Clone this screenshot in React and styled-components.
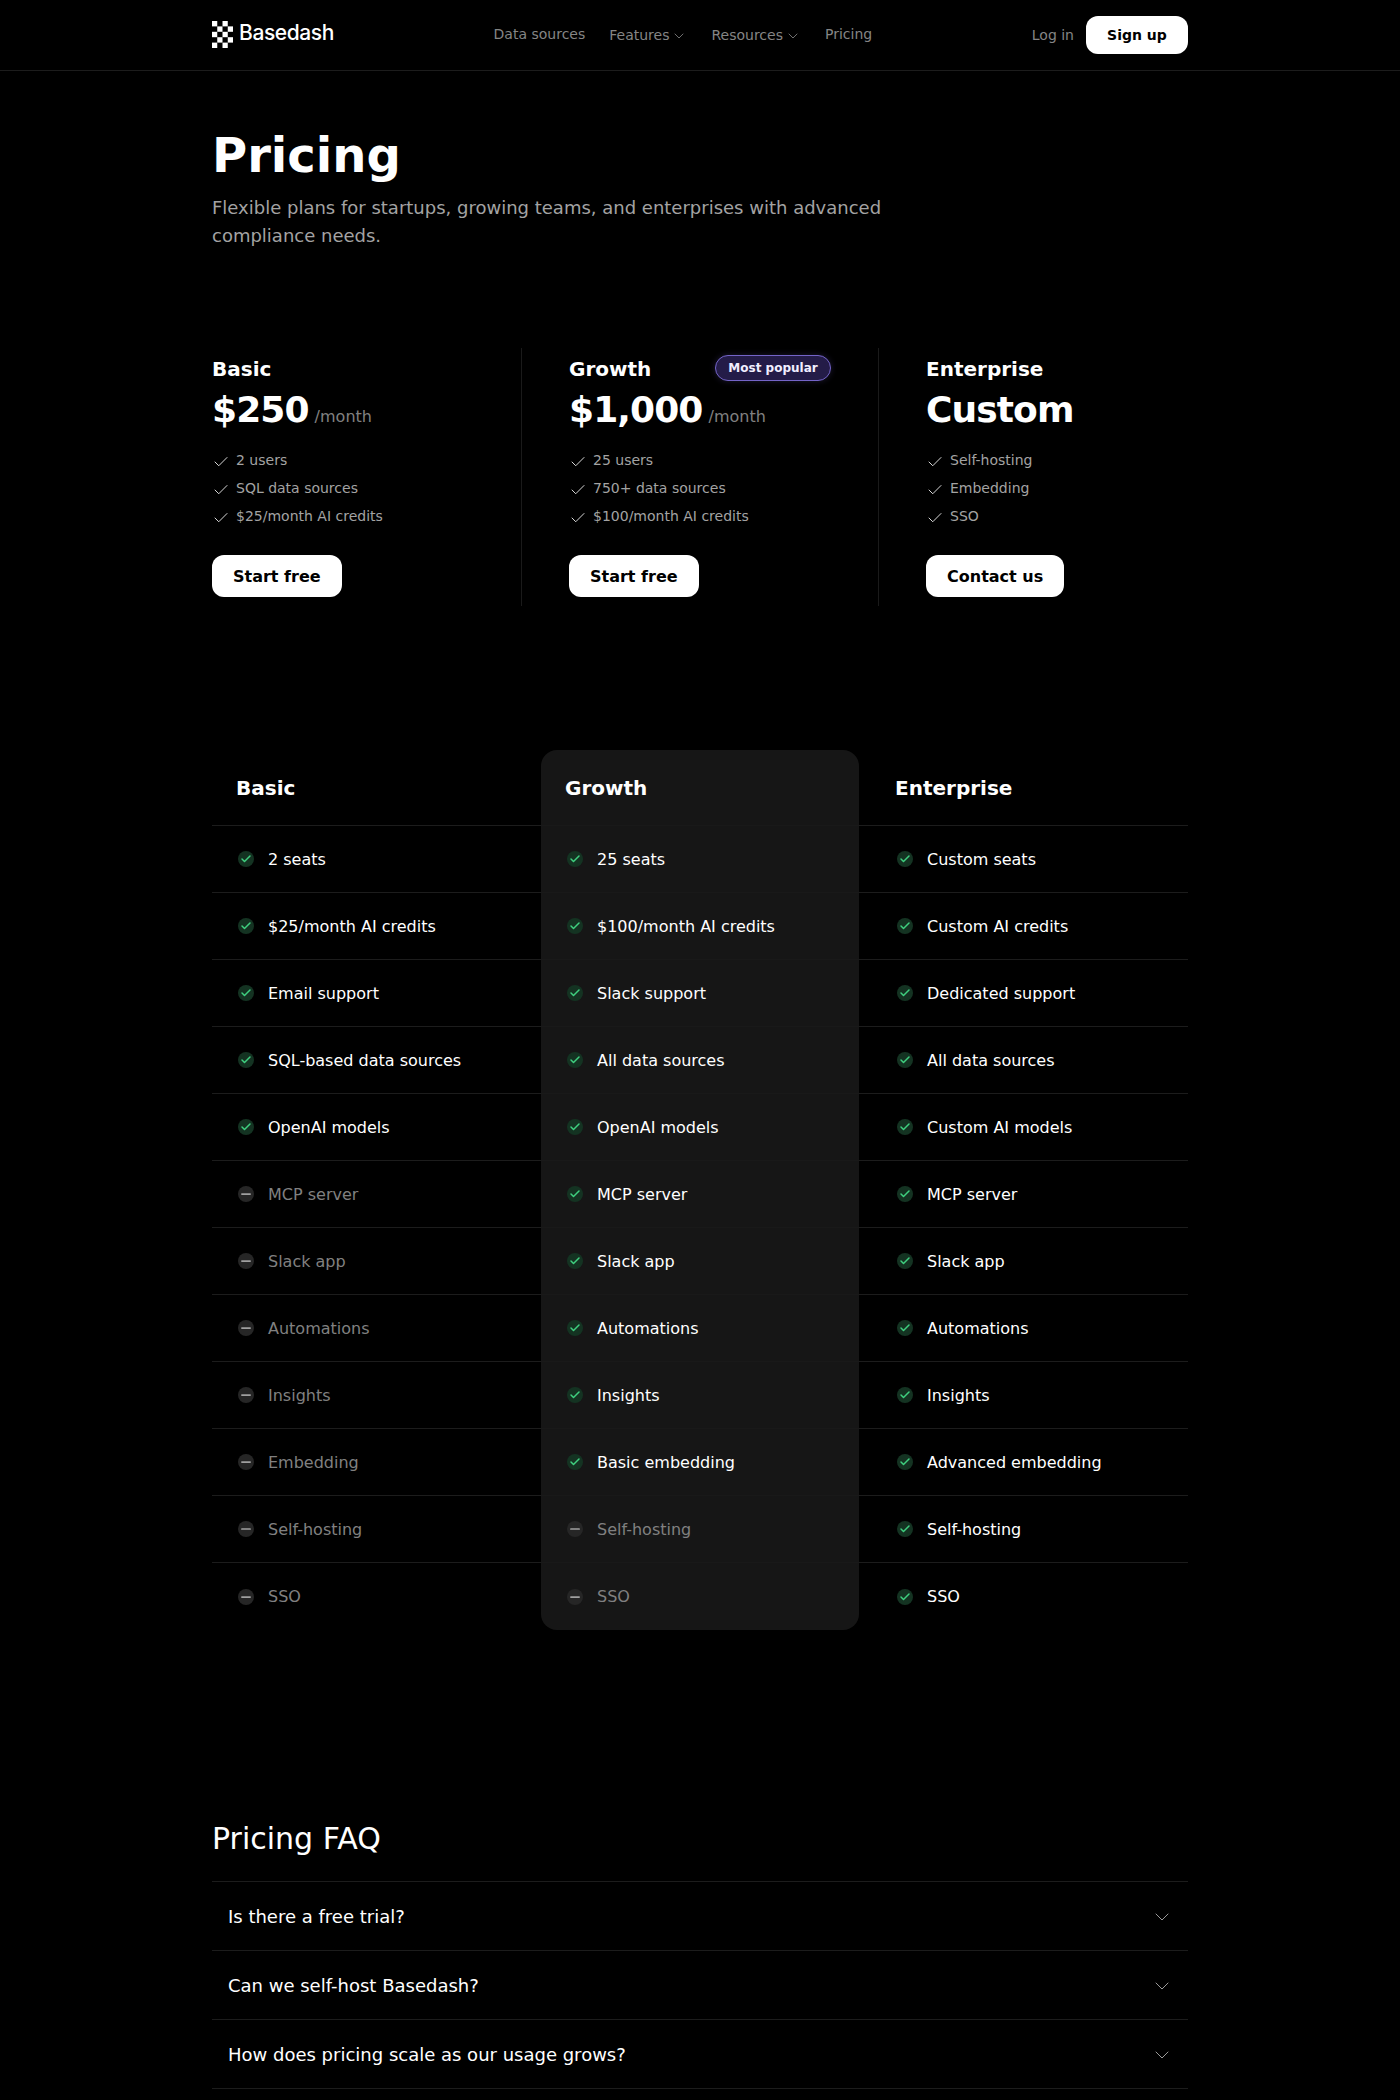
import React from 'react'
import styled, { createGlobalStyle } from 'styled-components'
import { Check, ChevronDown, Minus } from 'lucide-react'

const GlobalStyle = createGlobalStyle`
  html, body {
    margin: 0;
    background: #000;
    color: #fff;
    font-family: "DejaVu Sans", Verdana, sans-serif;
  }
  * { box-sizing: border-box; }
`

const Header = styled.header`
  height: 71px;
  border-bottom: 1px solid #1c1c1c;
`
const HeaderInner = styled.div`
  width: 976px;
  height: 70px;
  margin: 0 auto;
  display: flex;
  align-items: center;
  justify-content: space-between;
`
const Logo = styled.div`
  display: flex;
  align-items: center;
  gap: 6px;
  width: 122px;
  white-space: nowrap;
  font-family: Inter, sans-serif;
  font-weight: 500;
  font-size: 21px;
  line-height: 26px;
  letter-spacing: -0.4px;
  color: #fff;
  margin-top: -4px;
  svg {
    flex: none;
    margin-top: 2px;
  }
`
const Nav = styled.nav`
  display: flex;
  align-items: center;
  gap: 24px;
  margin-top: -2px;
  font-size: 14px;
  color: #858585;
`
const NavItem = styled.span`
  display: flex;
  align-items: center;
  gap: 2px;
  position: relative;
  top: ${p => (p.$menu ? '1px' : '0')};
  svg {
    margin-top: 1px;
  }
`
const Actions = styled.div`
  display: flex;
  align-items: center;
  gap: 12px;
`
const LogIn = styled.span`
  font-size: 14px;
  color: #858585;
`
const SignUp = styled.button`
  width: 102px;
  height: 38px;
  border: 0;
  border-radius: 12px;
  background: #fff;
  color: #000;
  font: bold 14px "DejaVu Sans", sans-serif;
`

const Page = styled.main`
  width: 976px;
  margin: 0 auto;
`
const Hero = styled.section`
  padding-top: 56px;
`
const Title = styled.h1`
  margin: 0;
  font-size: 48px;
  line-height: 56px;
  font-weight: 700;
`
const Lead = styled.p`
  width: 700px;
  margin: 11px 0 0;
  font-size: 18px;
  line-height: 28px;
  color: #a3a3a3;
`

const Plans = styled.section`
  display: flex;
  margin-top: 98px;
  height: 258px;
`
const Plan = styled.div`
  width: ${p => p.$width}px;
  padding: 0 ${p => (p.$last ? 0 : 47)}px 0 ${p => (p.$first ? 0 : 47)}px;
  border-right: ${p => (p.$last ? 'none' : '1px solid #1a1a1a')};
`
const PlanHead = styled.div`
  display: flex;
  align-items: center;
  justify-content: space-between;
  height: 28px;
  margin-top: 7px;
`
const PlanName = styled.h3`
  margin: 0;
  font-size: 20px;
  line-height: 28px;
  font-weight: 600;
`
const Badge = styled.span`
  width: 116px;
  height: 26px;
  margin-top: -3px;
  display: flex;
  align-items: center;
  justify-content: center;
  border: 1.5px solid #7464c8;
  border-radius: 999px;
  background: #241c48;
  box-shadow: 0 0 6px rgba(116, 100, 200, 0.25);
  color: #f1eeff;
  font-size: 12px;
  font-weight: 700;
`
const PriceRow = styled.div`
  display: flex;
  align-items: baseline;
  gap: 6px;
  height: 40px;
  margin-top: 7px;
`
const Price = styled.span`
  font-size: 36px;
  line-height: 40px;
  font-weight: 700;
  letter-spacing: -0.9px;
`
const Period = styled.span`
  font-size: 16px;
  color: #808080;
`
const Features = styled.ul`
  list-style: none;
  margin: 16px 0 0;
  padding: 0;
`
const Feature = styled.li`
  display: flex;
  align-items: center;
  gap: 6px;
  height: 28px;
  font-size: 14px;
  color: #a3a3a3;
  svg {
    color: #e6e6e6;
    flex: none;
    margin-top: 3px;
  }
`
const CTA = styled.button`
  display: block;
  height: 42px;
  margin-top: 25px;
  padding: 0 21px;
  border: 0;
  border-radius: 12px;
  background: #fff;
  color: #000;
  font: bold 16px "DejaVu Sans", sans-serif;
`

const Table = styled.section`
  display: grid;
  grid-template-columns: 329px 318px 329px;
  margin-top: 144px;
`
const Column = styled.div`
  background: ${p => (p.$hot ? '#161616' : 'transparent')};
  border-radius: ${p => (p.$hot ? '16px' : '0')};
`
const ColumnHead = styled.div`
  height: 76px;
  display: flex;
  align-items: center;
  padding-left: ${p => p.$pad}px;
  border-bottom: 1px solid ${p => (p.$hot ? '#191919' : '#1c1c1c')};
  font-size: 20px;
  font-weight: 700;
`
const Row = styled.div`
  height: 67px;
  display: flex;
  align-items: center;
  gap: 12px;
  padding-left: ${p => p.$pad + 2}px;
  border-bottom: 1px solid ${p => (p.$hot ? '#191919' : '#1c1c1c')};
  font-size: 16px;
  color: ${p => (p.$off ? '#808080' : '#fff')};
  &:last-child {
    border-bottom: 0;
  }
`
const Mark = styled.span`
  width: 16px;
  height: 16px;
  margin-right: 2px;
  border-radius: 50%;
  flex: none;
  display: flex;
  align-items: center;
  justify-content: center;
  background: ${p => (p.$off ? '#262626' : '#143322')};
  color: ${p => (p.$off ? '#a0a0a0' : '#3fcf7f')};
`

const Faq = styled.section`
  margin-top: 191px;
`
const FaqTitle = styled.h2`
  margin: 0 0 24px;
  font-size: 30px;
  line-height: 36px;
  font-weight: 400;
`
const FaqList = styled.div`
  border-top: 1px solid #1c1c1c;
`
const FaqRow = styled.div`
  height: 69px;
  display: flex;
  align-items: center;
  justify-content: space-between;
  padding: 0 16px;
  border-bottom: 1px solid #1c1c1c;
  font-size: 18px;
  svg {
    color: #9a9a9a;
    margin: 1px -2px 0 0;
  }
`

const LogoMark = () => (
  <svg width="21" height="27" viewBox="0 0 21 27" fill="#fff">
    {[0, 1, 2, 3, 4].map(r =>
      [0, 1, 2, 3].map(c =>
        (r + c) % 2 === 0 ? (
          <rect key={`${r}-${c}`} x={c * 5.25} y={r * 5.4} width="5.25" height="5.4" />
        ) : null
      )
    )}
  </svg>
)

const plans = [
  {
    name: 'Basic',
    price: '$250',
    period: '/month',
    width: 310,
    features: ['2 users', 'SQL data sources', '$25/month AI credits'],
    cta: 'Start free',
  },
  {
    name: 'Growth',
    price: '$1,000',
    period: '/month',
    width: 357,
    badge: 'Most popular',
    features: ['25 users', '750+ data sources', '$100/month AI credits'],
    cta: 'Start free',
  },
  {
    name: 'Enterprise',
    price: 'Custom',
    width: 309,
    features: ['Self-hosting', 'Embedding', 'SSO'],
    cta: 'Contact us',
  },
]

// [label, included]
const columns = [
  {
    name: 'Basic',
    pad: 24,
    rows: [
      ['2 seats', true],
      ['$25/month AI credits', true],
      ['Email support', true],
      ['SQL-based data sources', true],
      ['OpenAI models', true],
      ['MCP server', false],
      ['Slack app', false],
      ['Automations', false],
      ['Insights', false],
      ['Embedding', false],
      ['Self-hosting', false],
      ['SSO', false],
    ],
  },
  {
    name: 'Growth',
    pad: 24,
    hot: true,
    rows: [
      ['25 seats', true],
      ['$100/month AI credits', true],
      ['Slack support', true],
      ['All data sources', true],
      ['OpenAI models', true],
      ['MCP server', true],
      ['Slack app', true],
      ['Automations', true],
      ['Insights', true],
      ['Basic embedding', true],
      ['Self-hosting', false],
      ['SSO', false],
    ],
  },
  {
    name: 'Enterprise',
    pad: 36,
    rows: [
      ['Custom seats', true],
      ['Custom AI credits', true],
      ['Dedicated support', true],
      ['All data sources', true],
      ['Custom AI models', true],
      ['MCP server', true],
      ['Slack app', true],
      ['Automations', true],
      ['Insights', true],
      ['Advanced embedding', true],
      ['Self-hosting', true],
      ['SSO', true],
    ],
  },
]

const faqs = [
  'Is there a free trial?',
  'Can we self-host Basedash?',
  'How does pricing scale as our usage grows?',
]

const App = () => {
  return (
    <>
      <GlobalStyle />
      <Header>
        <HeaderInner>
          <Logo>
            <LogoMark />
            Basedash
          </Logo>
          <Nav>
            <NavItem>Data sources</NavItem>
            <NavItem $menu>
              Features <ChevronDown size={16} strokeWidth={1.25} />
            </NavItem>
            <NavItem $menu>
              Resources <ChevronDown size={16} strokeWidth={1.25} />
            </NavItem>
            <NavItem>Pricing</NavItem>
          </Nav>
          <Actions>
            <LogIn>Log in</LogIn>
            <SignUp>Sign up</SignUp>
          </Actions>
        </HeaderInner>
      </Header>
      <Page>
        <Hero>
          <Title>Pricing</Title>
          <Lead>Flexible plans for startups, growing teams, and enterprises with advanced compliance needs.</Lead>
        </Hero>
        <Plans>
          {plans.map((plan, i) => (
            <Plan key={plan.name} $width={plan.width} $first={i === 0} $last={i === plans.length - 1}>
              <PlanHead>
                <PlanName>{plan.name}</PlanName>
                {plan.badge && <Badge>{plan.badge}</Badge>}
              </PlanHead>
              <PriceRow>
                <Price>{plan.price}</Price>
                {plan.period && <Period>{plan.period}</Period>}
              </PriceRow>
              <Features>
                {plan.features.map(f => (
                  <Feature key={f}>
                    <Check size={18} strokeWidth={1.25} />
                    {f}
                  </Feature>
                ))}
              </Features>
              <CTA>{plan.cta}</CTA>
            </Plan>
          ))}
        </Plans>
        <Table>
          {columns.map(col => (
            <Column key={col.name} $hot={col.hot}>
              <ColumnHead $pad={col.pad} $hot={col.hot}>{col.name}</ColumnHead>
              {col.rows.map(([label, on]) => (
                <Row key={label} $pad={col.pad} $hot={col.hot} $off={!on}>
                  <Mark $off={!on}>
                    {on ? <Check size={12} strokeWidth={3} /> : <Minus size={14} strokeWidth={3} />}
                  </Mark>
                  {label}
                </Row>
              ))}
            </Column>
          ))}
        </Table>
        <Faq>
          <FaqTitle>Pricing FAQ</FaqTitle>
          <FaqList>
            {faqs.map(q => (
              <FaqRow key={q}>
                {q}
                <ChevronDown size={24} strokeWidth={1} />
              </FaqRow>
            ))}
          </FaqList>
        </Faq>
      </Page>
    </>
  )
}

export default App
